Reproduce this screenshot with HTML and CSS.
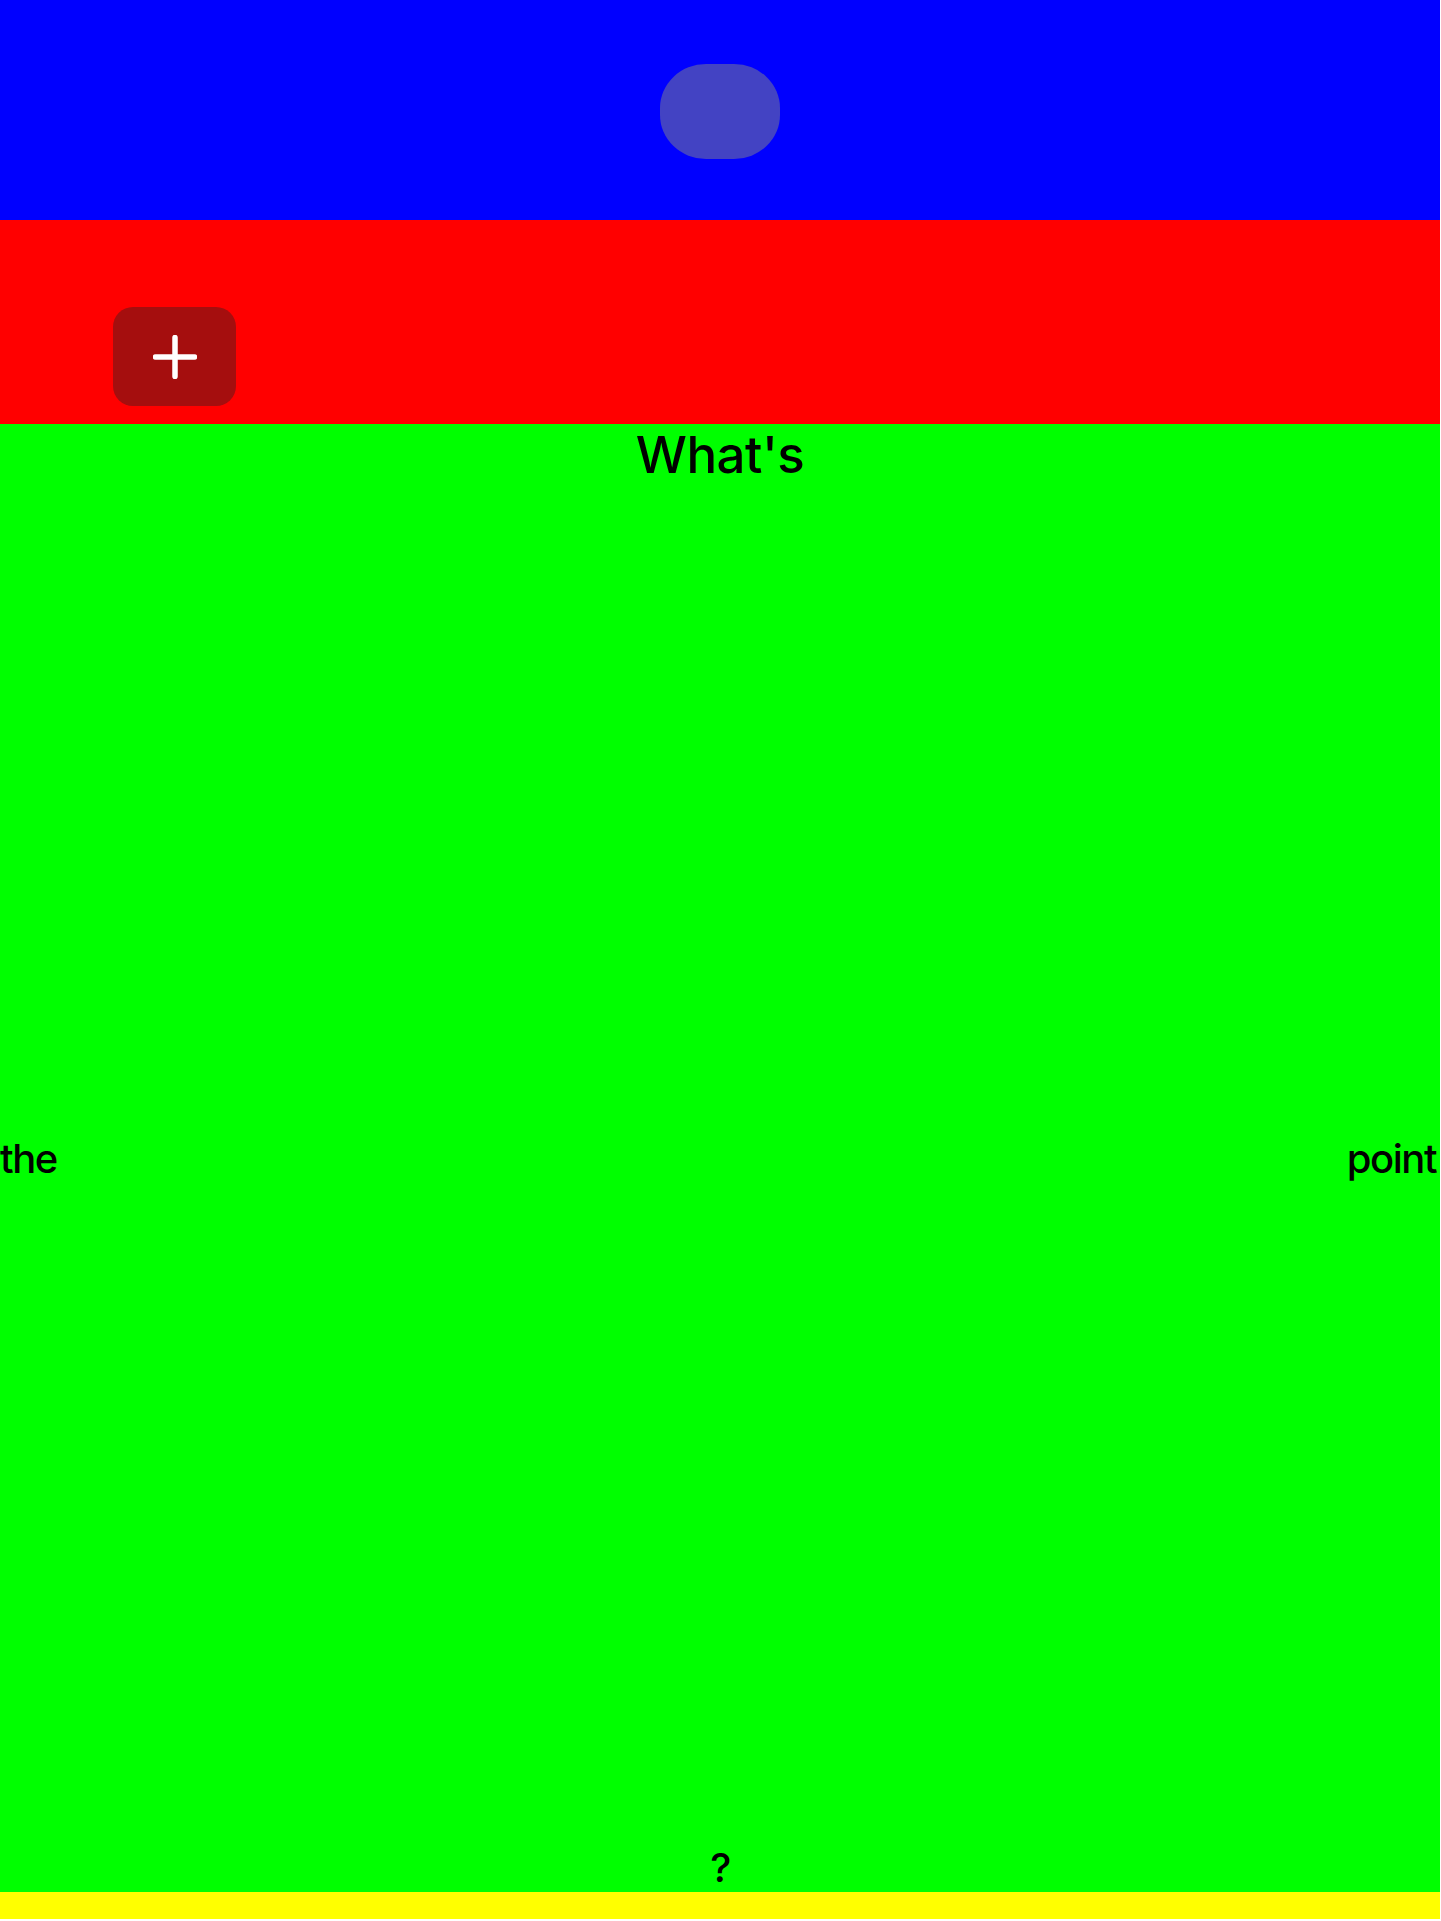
FILE: index.html
```html
<!DOCTYPE html>
<html lang="en">
<head>
<meta charset="utf-8">
<title>What's the point?</title>
<link rel="stylesheet" href="styles.css">
</head>
<body>
<div class="page">
  <header class="top">
    <div class="pill"></div>
  </header>
  <section class="bar">
    <button class="add" type="button" aria-label="Add">
      <svg width="44" height="44" viewBox="0 0 44 44" aria-hidden="true">
        <path d="M22 2.5V41.5M2.5 22H41.5" stroke="#fff" stroke-width="5.5" stroke-linecap="round" fill="none"/>
      </svg>
    </button>
  </section>
  <main class="main">
    <div class="word word-top">What's</div>
    <div class="row">
      <span class="word word-small">the</span>
      <span class="word word-small">point</span>
    </div>
    <div class="word word-small word-bottom">?</div>
  </main>
  <footer class="foot"></footer>
</div>
</body>
</html>
```
FILE: styles.css
```css
html, body {
  margin: 0;
  padding: 0;
  background: #ffffff;
}
body {
  font-family: "Inter", "Liberation Sans", sans-serif;
  color: #000;
}
.page {
  width: 1440px;
  display: flex;
  flex-direction: column;
}
.top {
  height: 220px;
  background: #0000ff;
  display: flex;
  align-items: center;
  justify-content: center;
}
.pill {
  width: 120px;
  height: 95px;
  border-radius: 46px / 44px;
  background: #4343c3;
  margin-top: 3px;
}
.bar {
  height: 204px;
  background: #ff0000;
  box-sizing: border-box;
  padding: 87px 0 0 113px;
}
.add {
  width: 123px;
  height: 99px;
  border: 0;
  padding: 0;
  border-radius: 20px;
  background: #a50e0e;
  display: flex;
  align-items: center;
  justify-content: center;
  cursor: pointer;
}
.add svg {
  display: block;
}
.main {
  height: 1468px;
  background: #00ff00;
  display: flex;
  flex-direction: column;
  justify-content: space-between;
}
.word {
  line-height: normal;
  font-weight: 500;
}
.word-top {
  font-size: 51px;
  text-align: center;
  letter-spacing: -0.5px;
}
.row {
  display: flex;
  justify-content: space-between;
  align-items: center;
  margin-bottom: 12px;
  padding-right: 4px;
}
.word-small {
  font-size: 40px;
  letter-spacing: -1.5px;
}
.word-bottom {
  text-align: center;
}
.foot {
  height: 27px;
  background: #ffff00;
}
```
